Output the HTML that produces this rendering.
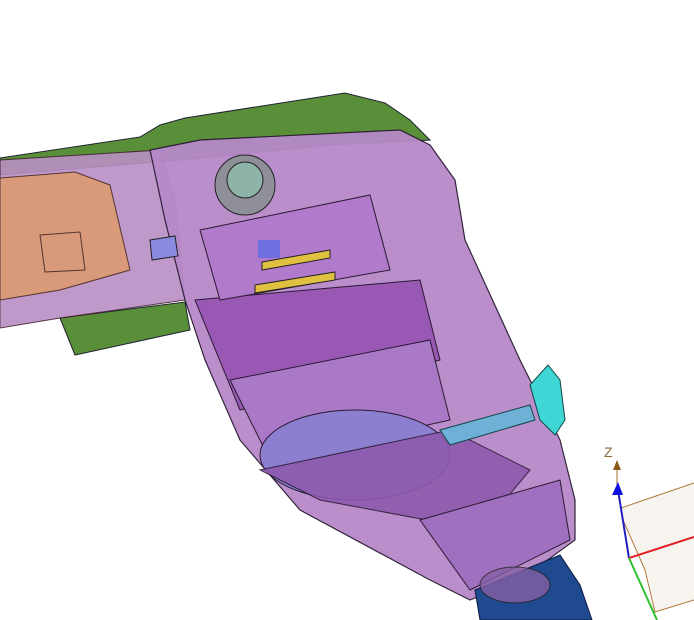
<!DOCTYPE html>
<html><head><meta charset="utf-8"><style>
html,body{margin:0;padding:0;background:#fff;width:694px;height:620px;overflow:hidden}
svg{display:block}
</style></head><body>
<svg width="694" height="620" viewBox="0 0 694 620" xmlns="http://www.w3.org/2000/svg">
<!-- green shell -->
<path d="M0 158 L140 137 L160 125 L185 118 L345 93 L385 103 L410 120 L430 140 L330 145 L180 160 L0 175 Z" fill="#5a8f3a" stroke="#223" stroke-width="1"/>
<path d="M60 318 L185 302 L190 330 L75 355 Z" fill="#5a8f3a" stroke="#223" stroke-width="1"/>
<!-- left handle -->
<path d="M0 160 L160 150 L175 200 L185 300 L60 318 L0 328 Z" fill="#b98fc4" stroke="#423" stroke-width="1" opacity="0.9"/>
<path d="M0 178 L75 172 L110 185 L130 270 L60 290 L0 300 Z" fill="#d89a78" stroke="#533" stroke-width="1"/>
<path d="M40 235 L80 232 L85 270 L45 272 Z" fill="none" stroke="#533"/>
<!-- main body -->
<path d="M150 150 L200 140 L400 130 L430 145 L455 180 L465 240 L520 360 L560 440 L575 500 L575 540 L520 580 L470 600 L430 580 L300 510 L240 440 L205 360 L185 300 L165 220 Z" fill="#b689c9" stroke="#2a1a33" stroke-width="1.2" opacity="0.95"/>
<path d="M195 300 L420 280 L440 360 L240 410 Z" fill="#9a58b5" stroke="#2a1a33"/>
<path d="M230 380 L430 340 L450 420 L270 460 Z" fill="#a978c6" stroke="#2a1a33"/>
<ellipse cx="355" cy="455" rx="95" ry="45" fill="#8d7fcf" stroke="#2a1a33"/>
<path d="M260 470 L450 430 L530 470 L480 530 L320 500 Z" fill="#8e5aae" stroke="#2a1a33" opacity="0.9"/>
<path d="M420 520 L560 480 L570 540 L470 590 Z" fill="#a070c0" stroke="#2a1a33"/>
<path d="M200 230 L370 195 L390 270 L220 300 Z" fill="#b17acb" stroke="#2a1a33"/>
<circle cx="245" cy="185" r="30" fill="#8f8f9a" stroke="#222"/>
<circle cx="245" cy="180" r="18" fill="#8fb3a8" stroke="#222"/>
<rect x="258" y="240" width="22" height="18" fill="#6f6fe0"/>
<path d="M262 262 L330 250 L330 258 L262 270 Z M255 285 L335 272 L335 280 L255 293 Z" fill="#e0c040" stroke="#222"/>
<path d="M150 240 L175 236 L178 256 L152 260 Z" fill="#8a8ae0" stroke="#222"/>
<!-- cyan clip -->
<path d="M530 385 L548 365 L560 380 L565 420 L555 435 L540 420 Z" fill="#3fd6d6" stroke="#144" stroke-width="1"/>
<path d="M440 430 L530 405 L535 420 L450 445 Z" fill="#6fb0d6" stroke="#144"/>
<!-- blue cylinder -->
<path d="M475 590 L560 555 L580 585 L592 620 L480 620 Z" fill="#1f4a90" stroke="#0a1a40"/>
<ellipse cx="515" cy="585" rx="35" ry="18" fill="#8560a5" stroke="#222" opacity="0.8"/>
<!-- axis triad -->
<path d="M621 508 L694 483 L694 600 L655 612 L645 570 L623 520 Z" fill="#f7f4f0"/>
<path d="M621 508 L694 483 M623 520 L645 570 L655 612 L694 600" stroke="#b07a3a" fill="none" stroke-width="1"/>
<line x1="617" y1="470" x2="617" y2="487" stroke="#a0702a" stroke-width="1"/>
<path d="M613 470 L617 460 L621 470 Z" fill="#8b5a1a"/>
<line x1="618" y1="490" x2="629" y2="558" stroke="#2020c0" stroke-width="2"/>
<path d="M612 495 L618 482 L623 495 Z" fill="#1010e0"/>
<line x1="629" y1="558" x2="694" y2="537" stroke="#e02020" stroke-width="2"/>
<line x1="629" y1="558" x2="657" y2="620" stroke="#30c030" stroke-width="2"/>
<text x="604" y="457" font-family="Liberation Sans, sans-serif" font-size="14" fill="#8b6a3a">Z</text>
</svg>
</body></html>
